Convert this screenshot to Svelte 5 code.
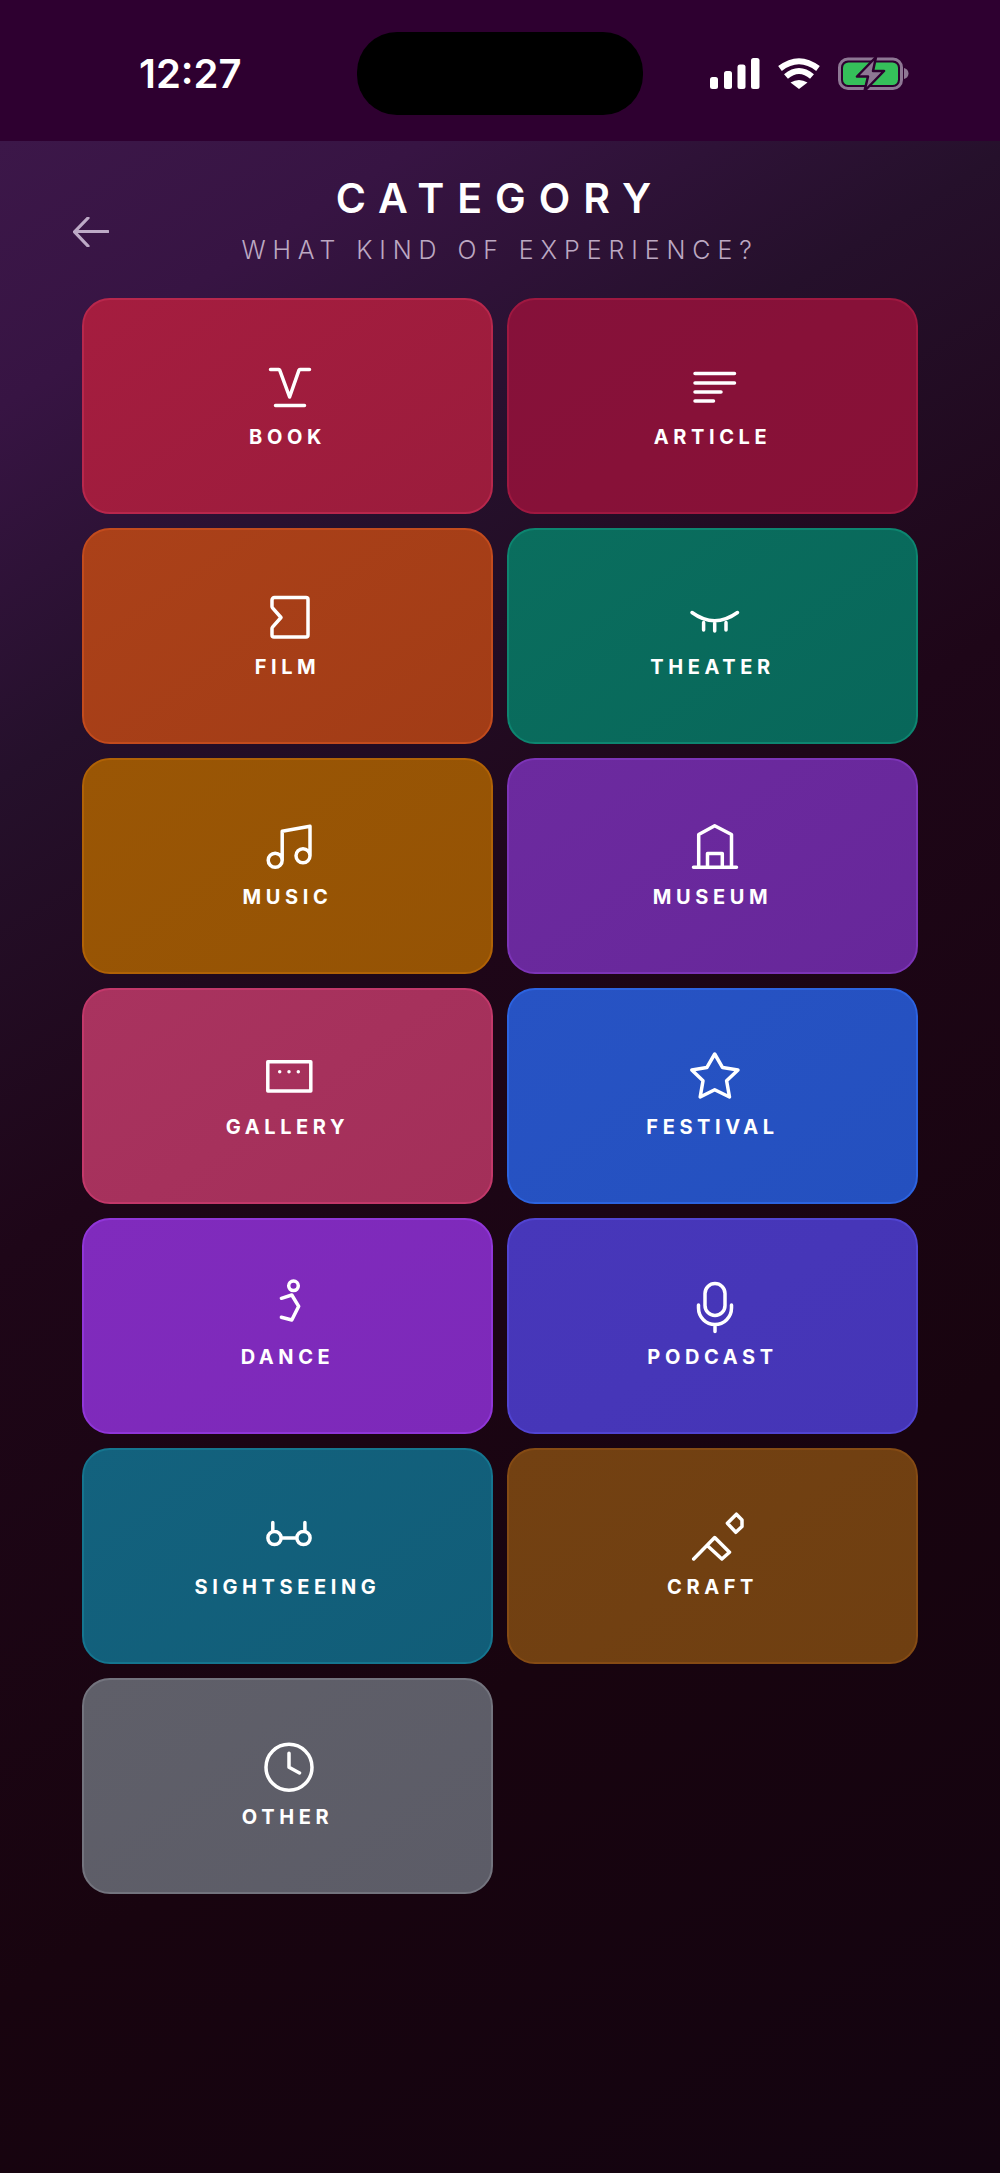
<script>
  // ring as a path, so every icon can be one stroked d string
  const ring = (x, y, r) =>
    `M${x - r} ${y}a${r} ${r} 0 1 0 ${2 * r} 0a${r} ${r} 0 1 0 ${-2 * r} 0z`;

  const categories = [
    { name: "BOOK", cls: "book", d: "M5.5 6.5h8.2a1 1 0 0 1 1 .7L24.6 34 34 7.2a1 1 0 0 1 1-.7h9.5M10.5 42.5h29" },
    { name: "ARTICLE", cls: "article", d: "M5 10.5h39.5M5 20h39.5M5 29h26M5 38h18.5" },
    { name: "FILM", cls: "film", d: "M9.5 4.5H41a2 2 0 0 1 2 2V42a2 2 0 0 1-2 2H9a2 2 0 0 1-2-2V35.5a2 2 0 0 1 .5-1.3L16 24.5 7.5 14.8a2 2 0 0 1-.5-1.3V7a2.5 2.5 0 0 1 2.5-2.5z" },
    { name: "THEATER", cls: "theater", d: "M2 19.5Q24.5 36 47.5 19.5M13.6 29.5v7.5M24.7 30v8M36 29.5v7.5" },
    { name: "MUSIC", cls: "music", d: `${ring(10.2, 37.3, 7)}${ring(38, 32.7, 7)}M17.2 37V8.2L45 3.2V32.5` },
    { name: "MUSEUM", cls: "museum", d: "M3.5 44.3h43M8.7 44.3V11.5L24.7 2.8 41.5 11.5V44.3M17.5 44.3V30.5h14.8v13.8" },
    { name: "GALLERY", cls: "gallery", d: "M2.8 8.8h43v29.2h-43zM14.7 18.7h0M24 18.7h0M33.3 18.7h0" },
    { name: "FESTIVAL", cls: "festival", d: "M24.7 1 32.6 14.6 48 17 36.6 27.8 39.5 44 24.7 36.7 10.2 44 13 27.8 1.8 17 16.8 14.6z" },
    { name: "DANCE", cls: "dance", d: `${ring(28.5, 2.8, 4.8)}M16.4 15.3 26.8 12 33.7 23.3 26.8 37 16.4 34.3` },
    { name: "PODCAST", cls: "podcast", d: "M15 10.5a10 10 0 0 1 20 0v12a10 10 0 0 1-20 0zM8.5 22v3a16.5 16.5 0 0 0 33 0v-3M25 41.5v7" },
    { name: "SIGHTSEEING", cls: "sightseeing", d: `${ring(9.5, 25, 6.6)}${ring(38.5, 25, 6.6)}M16.5 25h15M7.8 9.5v9M39.9 9.5v9` },
    { name: "CRAFT", cls: "craft", d: "M37.4 10.3 46.4 1.2 52 7V13.5L45.8 19.3zM3.7 46 24.7 24.5 39.5 39.3 31.9 46 17.5 32.7" },
    { name: "OTHER", cls: "other", d: `${ring(24, 24.3, 23)}M24 10.3v14L34.5 30` },
  ];
</script>

<div class="screen">
  <div class="status">
    <span class="time">12:27</span>
    <div class="island"></div>
    <div class="indicators">
      <svg class="signal" width="50" height="31" viewBox="0 0 50 31">
        <rect x="0" y="19" width="8" height="12" rx="2.5" />
        <rect x="14" y="13" width="8" height="18" rx="2.5" />
        <rect x="27.5" y="6.5" width="8" height="24.5" rx="2.5" />
        <rect x="41" y="0" width="8.5" height="31" rx="2.5" />
      </svg>
      <svg class="wifi" width="44" height="31" viewBox="0 0 44 31">
        <path d="M3 10.5Q22-4 41 10.5M9 18.5Q22 7.5 35 18.5" fill="none" stroke="#fff" stroke-width="6" />
        <path d="M22 31 13.5 24.5Q22 19.5 30.5 24.5z" fill="#fff" />
      </svg>
      <svg class="battery" width="71" height="36" viewBox="0 0 71 36">
        <rect x="1.5" y="3" width="62" height="29.5" rx="8.5" fill="none" stroke="#8e7794" stroke-width="3" />
        <rect x="5" y="6.5" width="55" height="22.5" rx="5.5" fill="#35c05a" />
        <path d="M66 12c2.5.5 4.5 2.5 4.5 5.5S68.500 22.500 66 23z" fill="#8e7794" />
        <path d="M38 1 19 20.5H30L26.5 35 46 15H35z" fill="#8e7794" stroke="#2e0030" stroke-width="2.5" stroke-linejoin="round" />
      </svg>
    </div>
  </div>

  <div class="content">
    <header class="head">
      <svg class="back" width="36" height="30" viewBox="0 0 36 30">
        <path d="M35 14.5H2M15 1 1.5 14.8 15 29" fill="none" stroke="#bdaac6" stroke-width="3.2" stroke-linecap="round" stroke-linejoin="round" />
      </svg>
      <div class="titles">
        <h1>CATEGORY</h1>
        <p>WHAT KIND OF EXPERIENCE?</p>
      </div>
    </header>

    <div class="grid">
      {#each categories as cat}
        <button class="card {cat.cls}">
          <svg class="icon" width="48" height="48" viewBox="-1 0 48 48">
            <path d={cat.d} />
          </svg>
          <span class="label">{cat.name}</span>
        </button>
      {/each}
    </div>
  </div>
</div>

<style>
  :global(body) {
    background: #120310;
  }
  .screen {
    width: 1000px;
    height: 2173px;
    font-family: Inter, "Liberation Sans", sans-serif;
    color: #fff;
    overflow: hidden;
  }

  /* ------ status bar ----- */
  .status {
    height: 141px;
    box-sizing: border-box;
    padding-top: 32px;
    background: #2e0030;
    display: grid;
    grid-template-columns: 357px 286px 1fr;
  }
  .time {
    padding-left: 139px;
    font-size: 40px;
    font-weight: 600;
    line-height: 84px;
  }
  .island {
    height: 83px;
    background: #000;
    border-radius: 40px;
  }
  .indicators {
    display: flex;
    align-items: flex-start;
    padding: 25.5px 0 0 67px;
  }
  .signal {
    fill: #fff;
    margin-right: 17px;
  }
  .wifi {
    margin-right: 17px;
  }
  .battery {
    margin-top: -1.5px;
  }

  /* ------ content ----- */
  .content {
    height: 2032px;
    box-sizing: border-box;
    padding-top: 33px;
    background: linear-gradient(148deg, #3c1749 0%, #371443 10%, #25102b 24%, #1e0618 42%, #18040f 70%, #130410 100%);
  }
  .head {
    position: relative;
    text-align: center;
  }
  .back {
    position: absolute;
    left: 73px;
    top: 43px;
  }
  .titles h1 {
    margin: 0;
    font-size: 41px;
    font-weight: 600;
    line-height: 48px;
    letter-spacing: 13px;
  }
  .titles p {
    margin: 12px 0 0;
    font-size: 25px;
    font-weight: 300;
    line-height: 32px;
    letter-spacing: 6.9px;
    color: #bca8c2;
  }
  .grid {
    margin-top: 32px;
    padding: 0 82px;
    display: grid;
    grid-template-columns: 411px 411px;
    grid-auto-rows: 216px;
    gap: 14px;
  }

  /* ------ cards ----- */
  .card {
    box-sizing: border-box;
    margin: 0;
    padding: 0;
    font: inherit;
    color: inherit;
    border: 2.5px solid;
    border-radius: 28px;
    display: flex;
    flex-direction: column;
    align-items: center;
    justify-content: center;
    gap: 14px;
  }
  .icon {
    overflow: visible;
    fill: none;
    stroke: #fff;
    stroke-width: 3.5;
    stroke-linecap: round;
    stroke-linejoin: round;
  }
  .label {
    font-size: 20px;
    font-weight: 700;
    line-height: 24px;
    letter-spacing: 4.6px;
  }
  .book { background: linear-gradient(145deg, #a51d3f, #9b1c3c); border-color: #b8274c; }
  .article { background: linear-gradient(145deg, #86113a, #881136); border-color: #9f1840; }
  .film { background: linear-gradient(145deg, #ab4119, #a23c16); border-color: #c24b1d; }
  .theater { background: linear-gradient(145deg, #0a6e5e, #08675a); border-color: #0d8570; }
  .music { background: linear-gradient(145deg, #9a5605, #955304); border-color: #b06206; }
  .museum { background: linear-gradient(145deg, #6c2a9f, #67279a); border-color: #7c34b7; }
  .gallery { background: linear-gradient(145deg, #a9335f, #a32f59); border-color: #c2386a; }
  .festival { background: linear-gradient(145deg, #2753c4, #2450bf); border-color: #2c63e0; }
  .dance { background: linear-gradient(145deg, #802bbd, #7d29b9); border-color: #9036d8; }
  .podcast { background: linear-gradient(145deg, #4737ba, #4535b6); border-color: #5144d2; }
  .sightseeing { background: linear-gradient(145deg, #13627e, #115d78); border-color: #15758f; }
  .craft { background: linear-gradient(145deg, #734112, #6f3f11); border-color: #854b14; }
  .other { background: linear-gradient(145deg, #5f5f69, #5c5c67); border-color: #73747e; }
</style>
